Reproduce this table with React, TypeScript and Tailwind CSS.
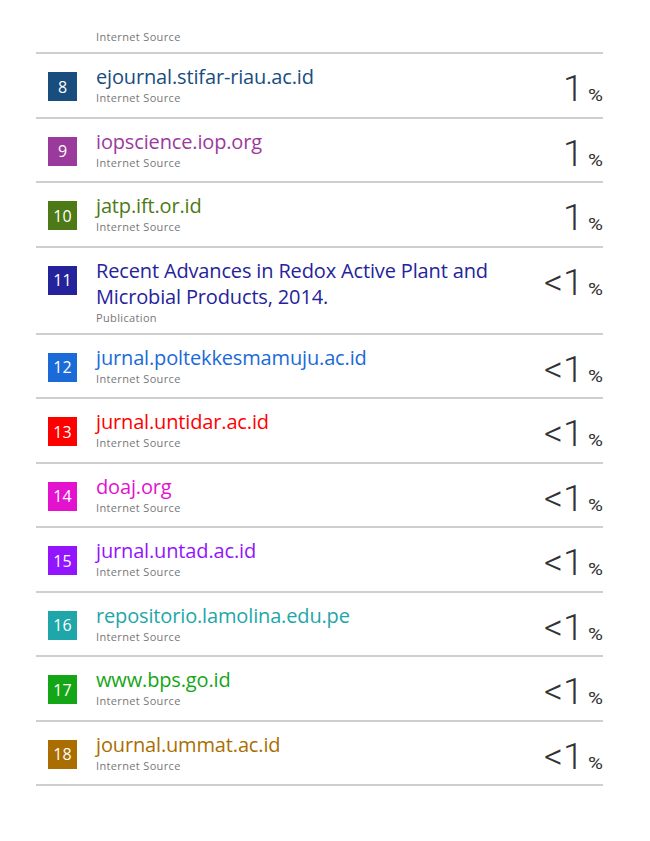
import React from 'react';

interface Source {
  rank: number;
  title: string;
  kind: string;
  color: string;
  percent: string;
}

const sources: Source[] = [
  { rank: 8, title: 'ejournal.stifar-riau.ac.id', kind: 'Internet Source', color: '#194d7e', percent: '1' },
  { rank: 9, title: 'iopscience.iop.org', kind: 'Internet Source', color: '#9b3a9d', percent: '1' },
  { rank: 10, title: 'jatp.ift.or.id', kind: 'Internet Source', color: '#4d7a16', percent: '1' },
  {
    rank: 11,
    title: 'Recent Advances in Redox Active Plant and Microbial Products, 2014.',
    kind: 'Publication',
    color: '#25239b',
    percent: '<1',
  },
  { rank: 12, title: 'jurnal.poltekkesmamuju.ac.id', kind: 'Internet Source', color: '#1a6ad8', percent: '<1' },
  { rank: 13, title: 'jurnal.untidar.ac.id', kind: 'Internet Source', color: '#ff0000', percent: '<1' },
  { rank: 14, title: 'doaj.org', kind: 'Internet Source', color: '#e212cf', percent: '<1' },
  { rank: 15, title: 'jurnal.untad.ac.id', kind: 'Internet Source', color: '#9314fe', percent: '<1' },
  { rank: 16, title: 'repositorio.lamolina.edu.pe', kind: 'Internet Source', color: '#1ea6a8', percent: '<1' },
  { rank: 17, title: 'www.bps.go.id', kind: 'Internet Source', color: '#14a616', percent: '<1' },
  { rank: 18, title: 'journal.ummat.ac.id', kind: 'Internet Source', color: '#aa6e00', percent: '<1' },
];

// big number + small percent sign, bottoms on the same baseline
function Percent({ value }: { value: string }) {
  return (
    <div className="flex items-baseline mt-[6px] text-[#333] font-['Roboto',sans-serif]">
      <span className="text-[37px] font-light leading-none">{value}</span>
      <span className="text-[17px] leading-none ml-[4px] mr-[3px] scale-x-[1.2] origin-left">%</span>
    </div>
  );
}

function SourceRow({ source }: { source: Source }) {
  return (
    <div className="flex border-b-2 border-[#cfcfcf] pt-[10px] pb-[8px]">
      <div className="w-[60px] shrink-0 pl-[12px] pt-[8px]">
        <div
          className="w-[29px] h-[29px] flex items-center justify-center text-white text-[16px]"
          style={{ backgroundColor: source.color }}
        >
          {source.rank}
        </div>
      </div>
      <div className="flex-1 min-h-[44.5px] pr-[40px]">
        <div className="text-[20px] leading-[26px] tracking-[-0.15px]" style={{ color: source.color }}>
          {source.title}
        </div>
        <div className="text-[11px] leading-[15px] text-[#777] tracking-[0.35px]">{source.kind}</div>
      </div>
      <Percent value={source.percent} />
    </div>
  );
}

export default function App() {
  return (
    <div className="w-[650px] min-h-[841px] bg-white font-['Open_Sans',sans-serif]">
      <div className="ml-[36px] w-[567px]">
        <div className="border-b-2 border-[#cfcfcf] pt-[29px] pb-[8px] pl-[60px]">
          <div className="text-[11px] leading-[15px] text-[#777] tracking-[0.35px]">Internet Source</div>
        </div>
        {sources.map(source => (
          <SourceRow key={source.rank} source={source} />
        ))}
      </div>
    </div>
  );
}
